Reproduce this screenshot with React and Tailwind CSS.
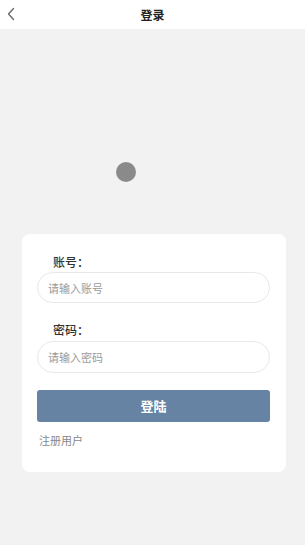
import React from "react";

const App = () => {
  return (
    <div
      className="min-h-[545px] w-full bg-[#f2f2f2] flex flex-col"
      style={{ fontFamily: '"Noto Sans CJK SC", "Noto Sans", sans-serif' }}
    >
      <header className="h-[29px] bg-white relative flex items-center justify-center">
        <button className="absolute left-[5px] top-[6px] text-[#555]">
          <svg width="12" height="16" viewBox="0 0 12 16" fill="none">
            <path d="M8.5 2.5 L3.5 8 L8.5 13.5" stroke="#666" strokeWidth="1.3" strokeLinecap="round" strokeLinejoin="round" />
          </svg>
        </button>
        <h1 className="text-[12px] font-bold text-[#222] leading-none">登录</h1>
      </header>

      <div className="h-[133px]" />
      <div className="ml-[116px] w-[20px] h-[20px] rounded-full bg-[#8a8a8a] blur-[0.6px]" />
      <div className="h-[52px]" />

      <div className="ml-[22px] mr-[19px] bg-white rounded-[8px] pl-[15px] pr-[16px] pt-[20px] pb-[24px] flex flex-col">
        <label className="ml-[16px] text-[12px] leading-[16px] font-medium text-[#333]">账号：</label>
        <input
          className="mt-[2px] h-[31px] w-full rounded-full border border-[#e8e8e8] px-[10px] text-[11px] text-[#333] placeholder-[#9a9a9a] outline-none"
          placeholder="请输入账号"
        />
        <label className="mt-[19px] ml-[16px] text-[12px] leading-[16px] font-medium text-[#333]">密码：</label>
        <input
          type="password"
          className="mt-[3px] h-[32px] w-full rounded-full border border-[#e8e8e8] px-[10px] text-[11px] text-[#333] placeholder-[#9a9a9a] outline-none"
          placeholder="请输入密码"
        />
        <button className="mt-[17px] h-[32px] w-full rounded-[3px] bg-[#6683a3] text-white text-[13px] font-bold">
          登陆
        </button>
        <span className="mt-[10px] ml-[2px] text-[11px] leading-[16px] text-[#888]">注册用户</span>
      </div>
    </div>
  );
};

export default App;
